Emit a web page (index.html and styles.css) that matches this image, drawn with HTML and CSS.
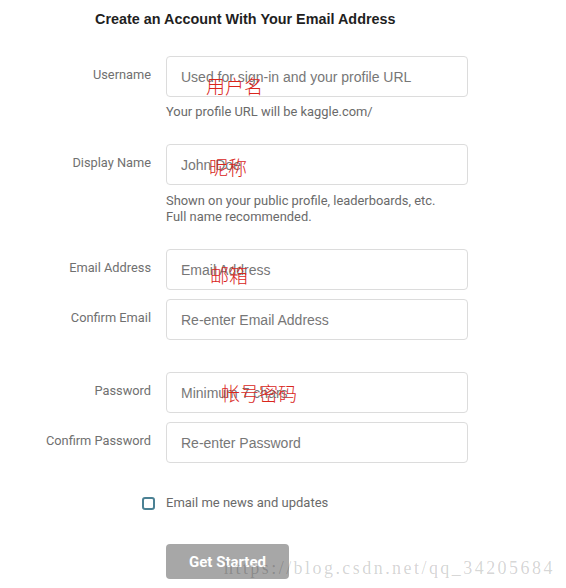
FILE: index.html
```html
<!DOCTYPE html>
<html lang="en">
<head>
<meta charset="utf-8">
<title>Create an Account</title>
<link rel="stylesheet" href="styles.css">
</head>
<body>
<main class="page">
  <h1 class="title">Create an Account With Your Email Address</h1>
  <form class="form">
    <div class="field field-first">
      <label class="label" for="username">Username</label>
      <div class="control">
        <div class="input-wrap">
          <input class="input" id="username" placeholder="Used for sign-in and your profile URL">
          <span class="note note-username">用户名</span>
        </div>
        <p class="help">Your profile URL will be kaggle.com/</p>
      </div>
    </div>
    <div class="field field-after-help">
      <label class="label" for="display">Display Name</label>
      <div class="control">
        <div class="input-wrap">
          <input class="input" id="display" placeholder="John Doe">
          <span class="note note-display">昵称</span>
        </div>
        <p class="help help-two">Shown on your public profile, leaderboards, etc.<br>Full name recommended.</p>
      </div>
    </div>
    <div class="field field-after-help">
      <label class="label" for="email">Email Address</label>
      <div class="control">
        <div class="input-wrap">
          <input class="input" id="email" placeholder="Email Address">
          <span class="note note-email">邮箱</span>
        </div>
      </div>
    </div>
    <div class="field field-pair">
      <label class="label" for="email2">Confirm Email</label>
      <div class="control">
        <input class="input" id="email2" placeholder="Re-enter Email Address">
      </div>
    </div>
    <div class="field field-group">
      <label class="label" for="pw">Password</label>
      <div class="control">
        <div class="input-wrap">
          <input class="input" id="pw" type="password" placeholder="Minimum 7 chars">
          <span class="note note-password">帐号密码</span>
        </div>
      </div>
    </div>
    <div class="field field-pair">
      <label class="label" for="pw2">Confirm Password</label>
      <div class="control">
        <input class="input" id="pw2" type="password" placeholder="Re-enter Password">
      </div>
    </div>
    <label class="check-row">
      <input class="check" type="checkbox">
      <span class="check-text">Email me news and updates</span>
    </label>
    <button class="submit" type="button">Get Started</button>
  </form>
  <div class="watermark">https://blog.csdn.net/qq_34205684</div>
</main>
</body>
</html>
```
FILE: styles.css
```css
html, body {
  margin: 0;
  padding: 0;
  background: #ffffff;
}

.page {
  position: relative;
  padding-top: 10px;
  height: 578px;
  overflow: hidden;
}

.title {
  margin: 0 0 0 95px;
  font-family: "Liberation Sans", Arial, sans-serif;
  font-size: 14.4px;
  line-height: 18px;
  font-weight: 600;
  color: #1f1f1f;
}

.form {
  display: flex;
  flex-direction: column;
}

.field {
  display: grid;
  grid-template-columns: 151px 302px;
  column-gap: 15px;
  align-items: start;
}

.field-first { margin-top: 28px; }
.field-after-help { margin-top: 24px; }
.field-pair { margin-top: 9px; }
.field-group { margin-top: 32px; }

.label {
  text-align: right;
  padding-top: 11px;
  font-family: Roboto, "Liberation Sans", sans-serif;
  font-size: 12.8px;
  line-height: 16px;
  color: #707070;
}

.control {
  display: flex;
  flex-direction: column;
}

.input-wrap {
  position: relative;
}

.input {
  display: block;
  width: 302px;
  height: 41px;
  box-sizing: border-box;
  margin: 0;
  padding: 0 14px;
  border: 1px solid #dcdcdc;
  border-radius: 4px;
  background: #ffffff;
  font-family: "Liberation Sans", Arial, sans-serif;
  font-size: 14px;
  color: #333;
  outline: none;
}

.input::placeholder {
  color: #777777;
  opacity: 1;
}

.help {
  margin: 7px 0 0;
  font-family: Roboto, "Liberation Sans", sans-serif;
  font-size: 12.9px;
  line-height: 16px;
  color: #6a6a6a;
}

.help-two { margin-top: 8px; }

.note {
  position: absolute;
  font-family: "Noto Sans CJK SC", sans-serif;
  font-size: 19px;
  line-height: 19px;
  font-weight: 300;
  color: #d9261c;
  white-space: nowrap;
  pointer-events: none;
}

.note-username { left: 40px; top: 20px; }
.note-display { left: 43px; top: 13px; }
.note-email { left: 44px; top: 16px; }
.note-password { left: 55px; top: 11px; }

.check-row {
  display: flex;
  align-items: center;
  gap: 11px;
  margin: 32px 0 0 142px;
  font-family: Roboto, "Liberation Sans", sans-serif;
  font-size: 13px;
  line-height: 16px;
  color: #6a6a6a;
}

.check {
  appearance: none;
  -webkit-appearance: none;
  width: 13px;
  height: 13px;
  margin: 0;
  box-sizing: border-box;
  border: 2px solid #4b8194;
  border-radius: 3px;
  background: #fff;
}

.submit {
  align-self: flex-start;
  margin: 33px 0 0 166px;
  width: 123px;
  height: 35px;
  border: none;
  border-radius: 4px;
  background: #a7a7a7;
  color: #ffffff;
  font-family: Roboto, "Liberation Sans", sans-serif;
  font-size: 15px;
  font-weight: 700;
  padding: 0;
}

.watermark {
  position: absolute;
  left: 224px;
  top: 557px;
  font-family: "Liberation Serif", serif;
  font-size: 18px;
  line-height: 22px;
  letter-spacing: 2.45px;
  color: rgba(0, 0, 0, 0.18);
  white-space: nowrap;
  pointer-events: none;
}
```
